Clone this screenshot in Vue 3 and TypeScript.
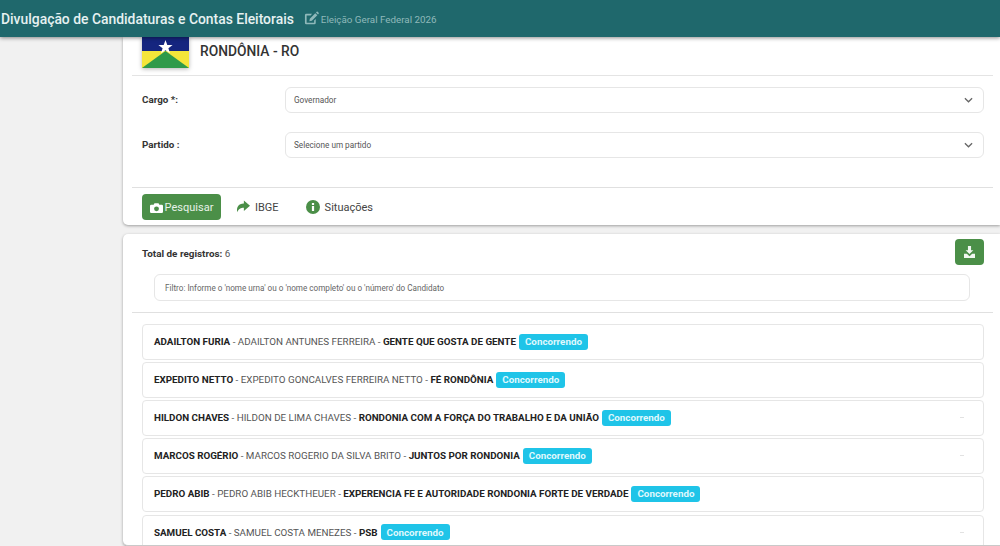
<script setup lang="ts">
interface Candidato {
  urna: string
  completo: string
  partido: string
  marca?: boolean
}

const candidatos: Candidato[] = [
  { urna: 'ADAILTON FURIA', completo: 'ADAILTON ANTUNES FERREIRA', partido: 'GENTE QUE GOSTA DE GENTE' },
  { urna: 'EXPEDITO NETTO', completo: 'EXPEDITO GONCALVES FERREIRA NETTO', partido: 'FÉ RONDÔNIA' },
  { urna: 'HILDON CHAVES', completo: 'HILDON DE LIMA CHAVES', partido: 'RONDONIA COM A FORÇA DO TRABALHO E DA UNIÃO', marca: true },
  { urna: 'MARCOS ROGÉRIO', completo: 'MARCOS ROGERIO DA SILVA BRITO', partido: 'JUNTOS POR RONDONIA', marca: true },
  { urna: 'PEDRO ABIB', completo: 'PEDRO ABIB HECKTHEUER', partido: 'EXPERENCIA FE E AUTORIDADE RONDONIA FORTE DE VERDADE' },
  { urna: 'SAMUEL COSTA', completo: 'SAMUEL COSTA MENEZES', partido: 'PSB', marca: true },
]
</script>

<template>
  <div class="page">
    <header class="topbar">
      <span class="title">Divulgação de Candidaturas e Contas Eleitorais</span>
      <svg class="edit-icon" viewBox="0 0 16 16" width="15" height="15">
        <path d="M12.5 8.6v4.2a1.400 1.400 0 0 1-1.400 1.400H2.400A1.400 1.400 0 0 1 1 12.800V4.400A1.400 1.400 0 0 1 2.400 3h6.200L7.100 4.700H2.800v7.800h8V10.200z" fill="currentColor" />
        <path d="M6.200 8.200 12 2.400l2.200 2.200-5.800 5.800-2.700.5zM12.800 1.600l.7-.7a.8.8 0 0 1 1.100 0l1 1a.8.8 0 0 1 0 1.100l-.7.7z" fill="currentColor" />
      </svg>
      <span class="subtitle">Eleição Geral Federal 2026</span>
    </header>

    <main class="content">
      <section class="card card-search">
        <div class="state-row">
          <svg class="flag" viewBox="0 0 47 31" width="47" height="31">
            <rect width="47" height="14" fill="#15257f" />
            <rect y="14" width="47" height="17" fill="#f4e53a" />
            <path d="M0 31 23.500 14 47 31z" fill="#2f9a4a" />
            <path d="M23.500 3l1.800 5h5.300l-4.200 3.200 1.600 5.100-4.500-3.100-4.500 3.100 1.600-5.100L16.400 8h5.300z" fill="#fff" />
          </svg>
          <h1 class="state-name">RONDÔNIA - RO</h1>
        </div>

        <div class="form">
          <div class="field">
            <label>Cargo *:</label>
            <div class="select">
              <span>Governador</span>
              <svg viewBox="0 0 10 6" width="9" height="6"><path d="M1 1l4 4 4-4" fill="none" stroke="#666" stroke-width="1.400" /></svg>
            </div>
          </div>
          <div class="field">
            <label>Partido :</label>
            <div class="select">
              <span>Selecione um partido</span>
              <svg viewBox="0 0 10 6" width="9" height="6"><path d="M1 1l4 4 4-4" fill="none" stroke="#666" stroke-width="1.400" /></svg>
            </div>
          </div>
        </div>

        <div class="actions">
          <button class="btn-search">
            <svg viewBox="0 0 16 14" width="13" height="12">
              <path fill-rule="evenodd" d="M5.500 1h5l1 2H14.500a1.500 1.500 0 0 1 1.500 1.500v7a1.500 1.500 0 0 1-1.500 1.500h-13A1.500 1.500 0 0 1 0 11.500v-7A1.500 1.500 0 0 1 1.500 3H4.500zM8 5a3 3 0 1 0 0 6 3 3 0 0 0 0-6z" fill="#fff" />
            </svg>
            Pesquisar
          </button>
          <a class="link">
            <svg viewBox="0 0 16 14" width="14" height="13">
              <path d="M9 0 16 6l-7 6V8.500C5.500 8.500 3 9.500 1.500 13.500.2 8 2.500 3.800 9 3.500z" fill="#4b8f48" />
            </svg>
            <span>IBGE</span>
          </a>
          <a class="link">
            <svg viewBox="0 0 14 14" width="14" height="14">
              <circle cx="7" cy="7" r="7" fill="#4b8f48" />
              <rect x="5.900" y="6" width="2.200" height="5" fill="#fff" />
              <rect x="5.900" y="3" width="2.200" height="2" fill="#fff" />
            </svg>
            <span>Situações</span>
          </a>
        </div>
      </section>

      <section class="card card-results">
        <div class="results-head">
          <span class="total"><b>Total de registros:</b> 6</span>
          <button class="btn-download">
            <svg viewBox="0 0 12 13" width="11" height="12">
              <path d="M4.300 0h3.400v4.500h2.500L6 8.600 1.800 4.500h2.500zM0 8.500h3L6 11l3-2.500h3V13H0z" fill="#f1f7f1" />
            </svg>
          </button>
        </div>
        <div class="filter">Filtro: Informe o 'nome urna' ou o 'nome completo' ou o 'número' do Candidato</div>
        <ul class="list">
          <li v-for="c in candidatos" :key="c.urna" class="row">
            <b>{{ c.urna }}</b>&nbsp;- {{ c.completo }} -&nbsp;<b>{{ c.partido }}</b>
            <span class="badge">Concorrendo</span>
            <i v-if="c.marca" class="mark"></i>
          </li>
        </ul>
      </section>
    </main>
  </div>
</template>

<style>
html, body {
  margin: 0;
  height: 100%;
  overflow: hidden;
  background: #f1f1f1;
}
</style>

<style scoped>
.page {
  height: 546px;
  overflow: hidden;
  font-family: Roboto, "Liberation Sans", sans-serif;
  color: #333;
}
.topbar {
  position: relative;
  z-index: 2;
  height: 37px;
  box-sizing: border-box;
  display: flex;
  align-items: center;
  padding-left: 1px;
  background: #1f686c;
  box-shadow: 0 1px 4px rgba(0, 0, 0, 0.45);
}
.title {
  color: #e6f1f1;
  font-size: 13.900px;
  font-weight: 500;
}
.edit-icon {
  color: #8fb9ba;
  margin-left: 10px;
  margin-right: 2px;
}
.subtitle {
  color: #8fb9ba;
  font-size: 9.800px;
  padding-top: 2px;
}
.content {
  padding-left: 123px;
}
.card {
  background: #fff;
  border-radius: 5px 0 0 5px;
  box-shadow: 0 1px 3px rgba(0, 0, 0, 0.35);
}
.card-search {
  height: 188px;
  border-top-left-radius: 0;
}
.state-row {
  height: 39px;
  box-sizing: border-box;
  display: flex;
  gap: 11px;
  margin: 0 7px 0 9px;
  padding-left: 10px;
  border-bottom: 1px solid #e4e4e4;
}
.flag {
  display: block;
  filter: drop-shadow(0 1px 2px rgba(0, 0, 0, 0.3));
}
.state-name {
  margin: 6px 0 0;
  font-size: 13.800px;
  font-weight: 500;
  color: #333;
  line-height: 17px;
}
.form {
  height: 111px;
  box-sizing: border-box;
  padding: 11px 16px 0 19px;
  display: flex;
  flex-direction: column;
  gap: 19px;
}
.field {
  display: flex;
  align-items: center;
}
.field label {
  width: 143px;
  padding-bottom: 1px;
  font-size: 9.800px;
  font-weight: 700;
  color: #333;
}
.select {
  flex: 1;
  height: 26px;
  box-sizing: border-box;
  display: flex;
  align-items: center;
  justify-content: space-between;
  padding: 0 10px 0 8px;
  border: 1px solid #e6e6e6;
  border-radius: 6px;
  font-size: 8.200px;
  color: #555;
}
.actions {
  display: flex;
  align-items: center;
  height: 38px;
  box-sizing: border-box;
  margin: 0 7px 0 9px;
  padding-left: 10px;
  border-top: 1px solid #e0e0e0;
  font-size: 11px;
}
.btn-search {
  width: 79px;
  height: 26px;
  display: flex;
  align-items: center;
  justify-content: center;
  gap: 2px;
  padding: 2px 0 0;
  border: none;
  border-radius: 4px;
  background: #4b8f48;
  color: #e8f2e8;
  font: inherit;
}
.link {
  display: flex;
  align-items: center;
  gap: 5px;
  margin-left: 15px;
  margin-right: 12px;
  color: #444;
}
.link span {
  padding-top: 2px;
}
.card-results {
  margin-top: 9px;
  height: 312px;
  overflow: hidden;
  padding: 5px 16px 0 19px;
  box-sizing: border-box;
  border-bottom: 1px solid #c9c9c9;
}
.results-head {
  display: flex;
  align-items: center;
  justify-content: space-between;
  height: 26px;
}
.total {
  font-size: 9.900px;
  color: #555;
  padding-top: 2px;
}
.total b {
  color: #333;
}
.btn-download {
  width: 29px;
  height: 26px;
  display: flex;
  align-items: center;
  justify-content: center;
  padding: 0;
  border: none;
  border-radius: 4px;
  background: #4b8f48;
}
.filter {
  margin: 9px 14px 0 12px;
  height: 27px;
  box-sizing: border-box;
  padding-left: 10px;
  display: flex;
  align-items: center;
  border: 1px solid #e6e6e6;
  border-radius: 6px;
  font-size: 8.150px;
  color: #666;
}
.list {
  list-style: none;
  margin: 11px -9px 0 -10px;
  padding: 11px 9px 0 10px;
  border-top: 1px solid #e0e0e0;
  display: flex;
  flex-direction: column;
  gap: 2.120px;
}
.row {
  height: 36px;
  flex: none;
  box-sizing: border-box;
  display: flex;
  align-items: center;
  padding: 0 19px 1px 11px;
  border: 1px solid #e6e6e6;
  border-radius: 4px;
  font-size: 9.800px;
  color: #555;
  white-space: pre;
}
.row b {
  color: #222;
  font-weight: 700;
}
.badge {
  margin-left: 3px;
  padding: 0 6px;
  height: 16px;
  display: flex;
  align-items: center;
  border-radius: 3px;
  background: #1fc4e8;
  color: #dff8fd;
  font-size: 9.800px;
  font-weight: 700;
}
.mark {
  margin-left: auto;
  width: 4px;
  height: 1px;
  background: #e2e2e2;
}
</style>
